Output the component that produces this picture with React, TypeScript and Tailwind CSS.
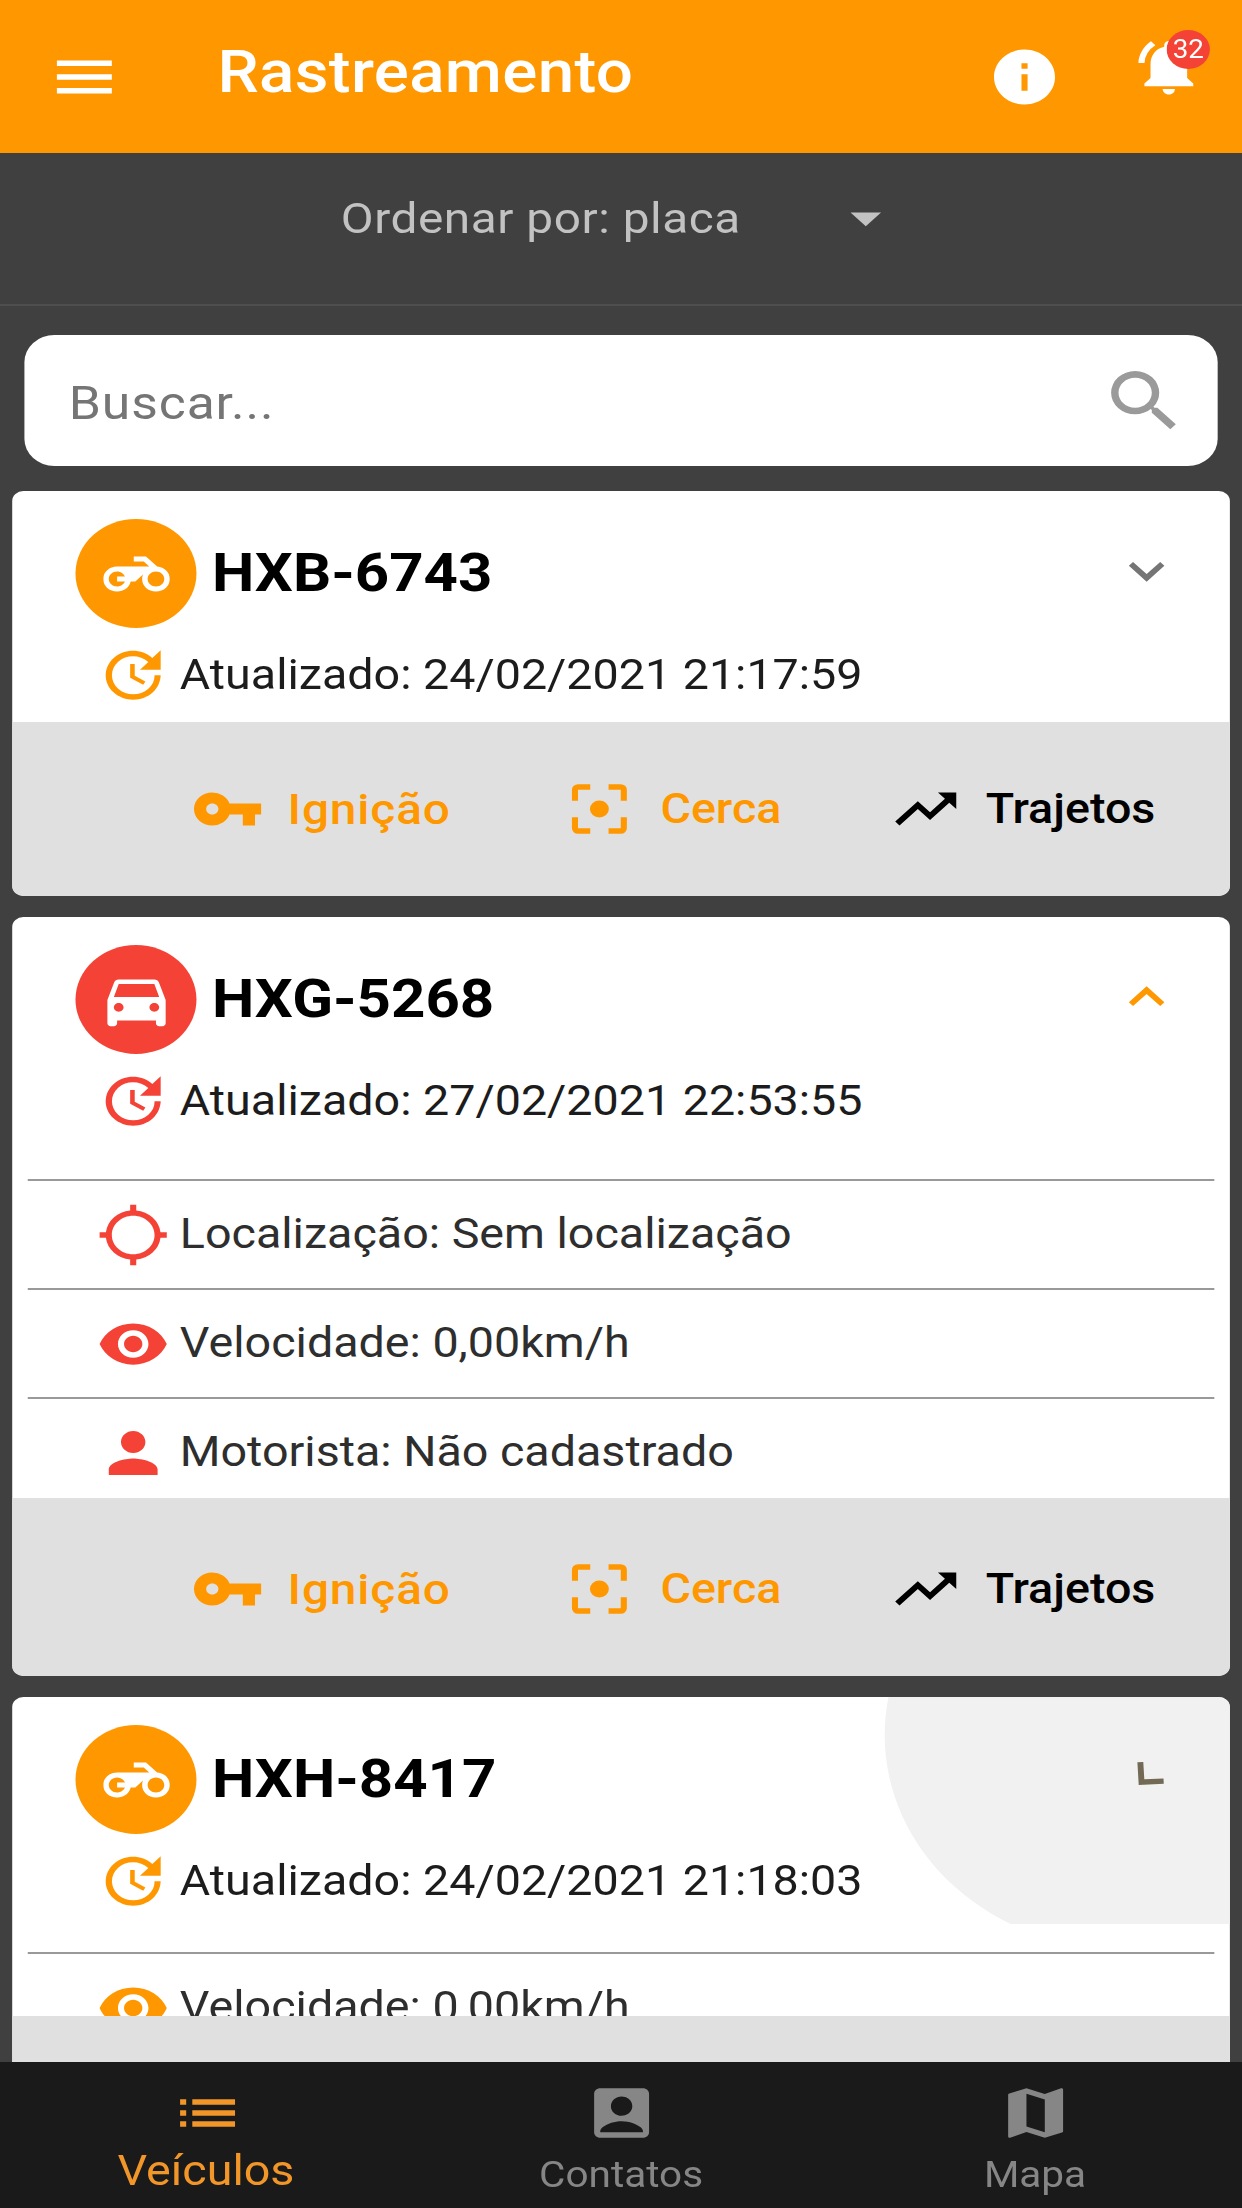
import React from 'react';

import {
  MdAccountBox,
  MdArrowDropDown,
  MdDirectionsCar,
  MdExpandLess,
  MdExpandMore,
  MdGpsNotFixed,
  MdInfo,
  MdList,
  MdMap,
  MdMenu,
  MdNotificationsActive,
  MdPerson,
  MdSearch,
  MdTrendingUp,
  MdUpdate,
  MdVisibility,
  MdVpnKey,
} from 'react-icons/md';
import { twMerge } from 'tailwind-merge';

type Icon = React.ComponentType<{ className?: string }>;

type Detail = {
  icon: Icon;
  text: string;
};

type Vehicle = {
  plate: string;
  updatedAt: string;
  icon: Icon;
  color: string;
  background: string;
  state: 'closed' | 'open' | 'opening';
  details: Detail[];
};

const MotorcycleIcon: Icon = ({ className }) => (
  <svg viewBox="0 0 24 24" fill="currentColor" className={className}>
    <path d="M19.44 9.03L15.41 5H11v2h3.59l2 2H5c-2.8 0-5 2.2-5 5s2.2 5 5 5c2.46 0 4.45-1.69 4.9-4h1.65l2.77-2.77c-.21.54-.32 1.14-.32 1.77 0 2.8 2.2 5 5 5s5-2.2 5-5c0-2.65-1.97-4.77-4.56-4.97zM7.82 15C7.4 16.15 6.28 17 5 17c-1.63 0-3-1.37-3-3s1.37-3 3-3c1.28 0 2.4.85 2.82 2H5v2h2.82zM19 17c-1.66 0-3-1.34-3-3s1.34-3 3-3 3 1.34 3 3-1.34 3-3 3z" />
  </svg>
);

const FenceIcon: Icon = ({ className }) => (
  <svg viewBox="0 0 24 24" fill="none" stroke="currentColor" strokeWidth={2} className={className}>
    <path d="M4 9V5a1 1 0 0 1 1-1h4M15 4h4a1 1 0 0 1 1 1v4M20 15v4a1 1 0 0 1-1 1h-4M9 20H5a1 1 0 0 1-1-1v-4" />
    <circle cx="12" cy="12" r="3.1" fill="currentColor" stroke="none" />
  </svg>
);

const vehicles: Vehicle[] = [
  {
    plate: 'HXB-6743',
    updatedAt: '24/02/2021 21:17:59',
    icon: MotorcycleIcon,
    color: 'text-[#ff9800]',
    background: 'bg-[#ff9800]',
    state: 'closed',
    details: [],
  },
  {
    plate: 'HXG-5268',
    updatedAt: '27/02/2021 22:53:55',
    icon: MdDirectionsCar,
    color: 'text-[#f44336]',
    background: 'bg-[#f44336]',
    state: 'open',
    details: [
      { icon: MdGpsNotFixed, text: 'Localização: Sem localização' },
      { icon: MdVisibility, text: 'Velocidade: 0,00km/h' },
      { icon: MdPerson, text: 'Motorista: Não cadastrado' },
    ],
  },
  {
    plate: 'HXH-8417',
    updatedAt: '24/02/2021 21:18:03',
    icon: MotorcycleIcon,
    color: 'text-[#ff9800]',
    background: 'bg-[#ff9800]',
    state: 'opening',
    details: [{ icon: MdVisibility, text: 'Velocidade: 0,00km/h' }],
  },
];

const TopBar: React.FC = () => (
  <header className="flex h-[153px] shrink-0 items-center bg-[#ff9800] pl-[43px] text-white">
    <MdMenu className="size-[66px]" />
    <h1 className="ml-[87px] pb-[10px] text-[59px] leading-none font-medium tracking-[0.3px]">Rastreamento</h1>
    <MdInfo className="mr-[64px] ml-auto size-[66px]" />
    <div className="relative mr-[33px] mb-[20px]">
      <MdNotificationsActive className="size-[66px]" />
      <span className="absolute -top-[4px] -right-[4px] flex size-[39px] items-center justify-center rounded-full bg-[#f44336] text-[25px] leading-none">
        32
      </span>
    </div>
  </header>
);

const SortBar: React.FC = () => (
  <div className="flex h-[153px] shrink-0 border-b-2 border-[#4e4e4e] pt-[31px] pl-[307px] text-[#c2c2c2]">
    <button className="flex h-[68px] items-center">
      <span className="w-[440px] text-left text-[43px] leading-none tracking-[0.5px]">Ordenar por: placa</span>
      <MdArrowDropDown className="size-[66px]" />
    </button>
  </div>
);

const SearchBox: React.FC = () => (
  <div className="mx-[22px] mt-[29px] flex h-[131px] shrink-0 items-center justify-between rounded-[27px] bg-white pr-[26px] pl-[40px]">
    <span className="pt-[5px] text-[46.5px] leading-none tracking-[0.8px] text-[#757575]">Buscar...</span>
    <MdSearch className="size-[80px] text-[#9a9a9a]" />
  </div>
);

const DetailRow: React.FC<{ detail: Detail; color: string }> = ({ detail, color }) => (
  <div className="mx-[14px] flex h-[109px] shrink-0 items-center gap-[9px] border-t-2 border-[#999999] pl-[62px]">
    <detail.icon className={twMerge('size-[66px]', color)} />
    <span className="pb-px text-[42px] leading-none text-[#2e2e2e]">{detail.text}</span>
  </div>
);

const CardActions: React.FC = () => (
  <div className="flex h-[174px] items-center text-[42px] leading-none font-medium text-[#ff9800]">
    <MdVpnKey className="ml-[161px] size-[66px]" />
    <span className="ml-[21px] w-[248px] text-[43px] tracking-[0.8px]">Ignição</span>
    <FenceIcon className="size-[66px]" />
    <span className="ml-[22px] w-[206px]">Cerca</span>
    <MdTrendingUp className="size-[66px] text-black" />
    <span className="ml-[21px] text-black">Trajetos</span>
  </div>
);

const VehicleCard: React.FC<{ vehicle: Vehicle }> = ({ vehicle }) => {
  const { state } = vehicle;
  const Chevron = state === 'open' ? MdExpandLess : MdExpandMore;

  return (
    <article
      className={twMerge(
        'flex shrink-0 flex-col overflow-hidden rounded-[10px] bg-white',
        state === 'closed' && 'h-[405px]',
        state === 'open' && 'h-[759px]',
        state === 'opening' && 'h-[500px]',
      )}>
      <div
        className={twMerge(
          'relative shrink-0 overflow-hidden',
          state === 'closed' && 'h-[231px]',
          state === 'open' && 'mb-[35px] h-[227px]',
          state === 'opening' && 'mb-[28px] h-[227px]',
        )}>
        {state === 'opening' && (
          <span className="absolute -top-[176px] left-[786px] size-[428px] rounded-full bg-[#f1f1f1]" />
        )}
        <div className="relative flex h-[165px] items-center pr-[43px] pl-[57px]">
          <div className={twMerge('flex size-[109px] items-center justify-center rounded-full text-white', vehicle.background)}>
            <vehicle.icon className={vehicle.icon === MdDirectionsCar ? 'size-[70px]' : 'size-[60px]'} />
          </div>
          <h2 className="ml-[14px] pb-[2px] text-[54px] leading-none font-bold text-black">{vehicle.plate}</h2>
          <Chevron
            className={twMerge(
              'mb-[5px] ml-auto size-[64px] text-[#757575]',
              state === 'open' && 'text-[#ff9800]',
              state === 'opening' && 'rotate-[42deg] text-[#736a55]',
            )}
          />
        </div>
        <div className="relative -mt-[14px] flex h-[66px] items-center gap-[9px] pl-[76px]">
          <MdUpdate className={twMerge('size-[66px]', vehicle.color)} />
          <span className="text-[42px] leading-none text-[#1c1c1c]">Atualizado: {vehicle.updatedAt}</span>
        </div>
      </div>
      <div
        className={twMerge(
          'flex flex-col overflow-hidden',
          state === 'open' && 'h-[319px] shrink-0',
          state === 'opening' && 'h-[64px] shrink-0',
        )}>
        {vehicle.details.map((detail) => (
          <DetailRow key={detail.text} detail={detail} color={vehicle.color} />
        ))}
      </div>
      <footer className="flex flex-1 flex-col justify-end bg-[#e0e0e0]">
        {state !== 'opening' && <CardActions />}
      </footer>
    </article>
  );
};

const BottomNav: React.FC = () => (
  <nav className="grid h-[146px] shrink-0 grid-cols-3 bg-[#1a1a1a] text-[36.5px] leading-none text-[#868686]">
    <div className="flex flex-col items-center pt-[18px] text-[#f2962a]">
      <MdList className="size-[66px]" />
      <span className="mt-[4px] pr-[2px] text-[42px]">Veículos</span>
    </div>
    <div className="flex flex-col items-center pt-[18px]">
      <MdAccountBox className="size-[66px]" />
      <span className="mt-[11px]">Contatos</span>
    </div>
    <div className="flex flex-col items-center pt-[18px]">
      <MdMap className="size-[66px]" />
      <span className="mt-[11px]">Mapa</span>
    </div>
  </nav>
);

const App: React.FC = () => (
  <div className="h-[2208px] w-[1242px] overflow-hidden bg-[#404040]">
    <div className="flex h-[2208px] w-[1119px] origin-top-left scale-x-[1.11] flex-col font-['Roboto',sans-serif]">
      <TopBar />
      <SortBar />
      <SearchBox />
      <main className="mt-[25px] flex min-h-0 flex-1 flex-col gap-[21px] overflow-hidden px-[11px]">
        {vehicles.map((vehicle) => (
          <VehicleCard key={vehicle.plate} vehicle={vehicle} />
        ))}
      </main>
      <BottomNav />
    </div>
  </div>
);

export default App;
